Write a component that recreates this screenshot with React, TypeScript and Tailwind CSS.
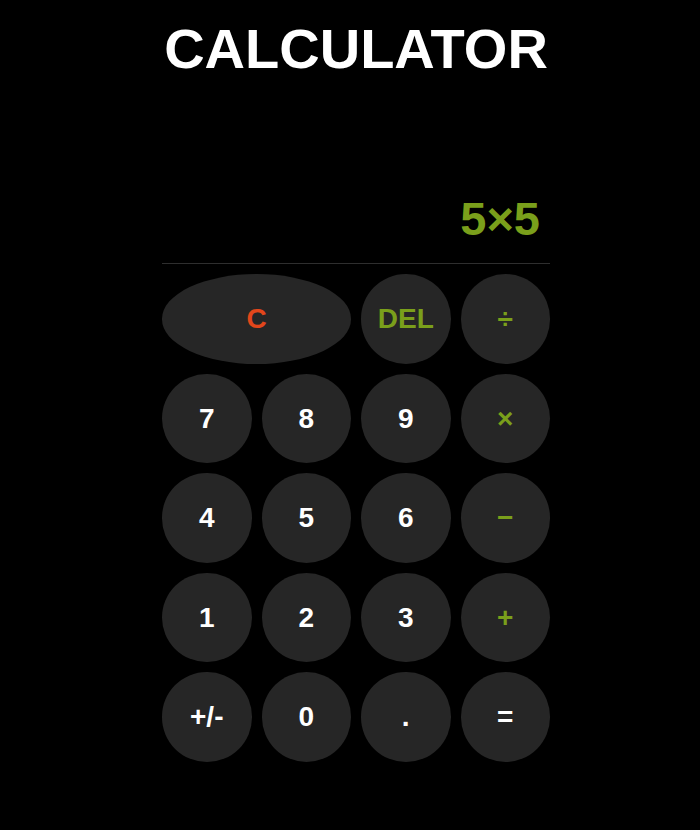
import React from "react";

type Key = {
  label: string;
  kind: "num" | "op" | "clear" | "del" | "eq";
  wide?: boolean;
};

const keys: Key[] = [
  { label: "C", kind: "clear", wide: true },
  { label: "DEL", kind: "del" },
  { label: "÷", kind: "op" },
  { label: "7", kind: "num" },
  { label: "8", kind: "num" },
  { label: "9", kind: "num" },
  { label: "×", kind: "op" },
  { label: "4", kind: "num" },
  { label: "5", kind: "num" },
  { label: "6", kind: "num" },
  { label: "−", kind: "op" },
  { label: "1", kind: "num" },
  { label: "2", kind: "num" },
  { label: "3", kind: "num" },
  { label: "+", kind: "op" },
  { label: "+/-", kind: "num" },
  { label: "0", kind: "num" },
  { label: ".", kind: "num" },
  { label: "=", kind: "eq" },
];

const colorFor = (kind: Key["kind"]) => {
  if (kind === "clear") return "text-[#e2461b]";
  if (kind === "del" || kind === "op") return "text-[#7a9f1b]";
  return "text-white";
};

export default function App() {
  return (
    <div className="min-h-[830px] w-full bg-black font-['Liberation_Sans',Arial,sans-serif]">
      {/* Title */}
      <h1 className="pt-[17px] pl-[12px] text-center text-[56px] font-bold leading-[1.15] text-white">
        CALCULATOR
      </h1>

      <div className="ml-[162px] w-[388px]">
        {/* Display */}
        <div className="flex h-[183px] items-end justify-end border-b border-[#2e2e2e] pb-[21px] pr-[10px]">
          <span className="text-[47px] font-bold leading-none text-[#7a9f1b]">
            5×5
          </span>
        </div>

        {/* Keypad */}
        <div className="mt-[10px] grid grid-cols-4 gap-x-[10px] gap-y-[10px]">
          {keys.map((k) => (
            <button
              key={k.label}
              className={`flex h-[89.5px] items-center justify-center rounded-[50%] bg-[#262626] text-[28px] font-bold ${colorFor(
                k.kind
              )} ${k.wide ? "col-span-2" : ""}`}
            >
              {k.label}
            </button>
          ))}
        </div>
      </div>
    </div>
  );
}
